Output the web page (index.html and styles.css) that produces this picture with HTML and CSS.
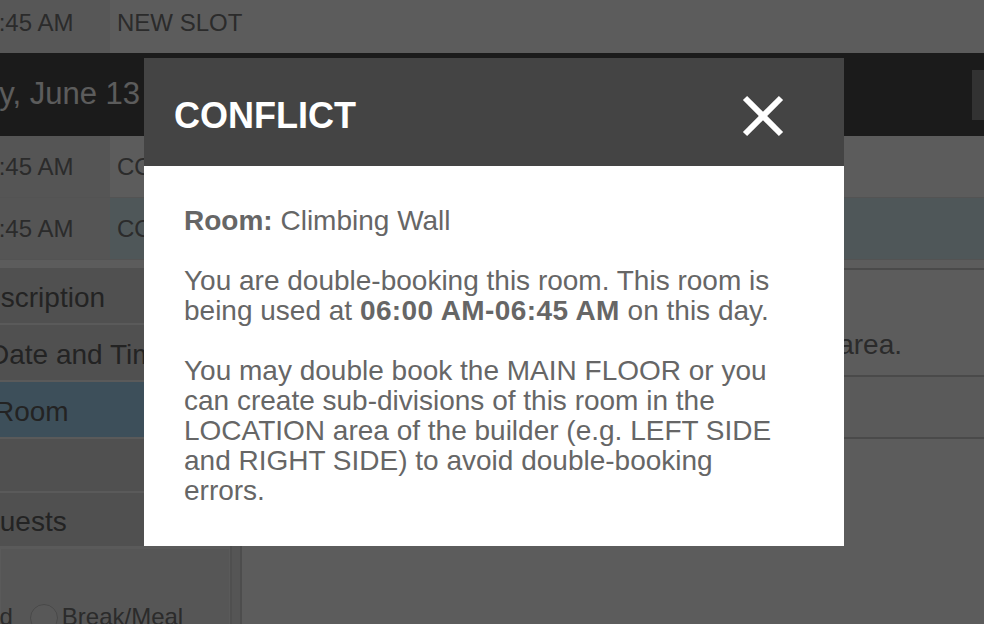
FILE: index.html
```html
<!DOCTYPE html>
<html lang="en">
<head>
<meta charset="utf-8">
<title>Conflict</title>
<link rel="stylesheet" href="styles.css">
</head>
<body>
<div class="page">
  <div class="slot-row slot-row--first">
    <div class="slot-time">06:45 AM</div>
    <div class="slot-name">NEW SLOT</div>
  </div>
  <div class="day-bar">
    <div class="day-title">Tuesday, June 13</div>
    <div class="day-btn"></div>
  </div>
  <div class="slot-row">
    <div class="slot-time">06:45 AM</div>
    <div class="slot-name">CONFLICT SLOT</div>
  </div>
  <div class="slot-row slot-row--selected">
    <div class="slot-time">06:45 AM</div>
    <div class="slot-name">CONFLICT SLOT</div>
  </div>
  <div class="editor">
    <nav class="sidebar">
      <div class="side-item side-item--desc">Description</div>
      <div class="side-item side-item--date">Date and Time</div>
      <div class="side-item side-item--active side-item--room">Room</div>
      <div class="side-item side-item--empty"></div>
      <div class="side-item side-item--guests">Guests</div>
      <div class="side-box">
        <div class="radio-row">
          <span class="radio-label radio-label--first">Timed</span>
          <span class="radio"></span>
          <span class="radio-label">Break/Meal</span>
        </div>
      </div>
    </nav>
    <section class="content">
      <div class="field field--help">
        <div class="help-text">Select a room created in the LOCATION area.</div>
      </div>
      <div class="field field--second"></div>
    </section>
  </div>
</div>

<div class="overlay"></div>

<div class="modal" role="dialog">
  <div class="modal-header">
    <h2 class="modal-title">CONFLICT</h2>
    <svg class="modal-close" width="42" height="42" viewBox="0 0 42 42" aria-label="Close">
      <line x1="3" y1="3" x2="39" y2="39" stroke="#fff" stroke-width="6"/>
      <line x1="39" y1="3" x2="3" y2="39" stroke="#fff" stroke-width="6"/>
    </svg>
  </div>
  <div class="modal-body">
    <p><b>Room:</b> Climbing Wall</p>
    <p>You are double-booking this room. This room is being used at <b class="time-range">06:00 AM-06:45 AM</b> on this day.</p>
    <p>You may double book the MAIN FLOOR or you can create sub-divisions of this room in the LOCATION area of the builder (e.g. LEFT SIDE and RIGHT SIDE) to avoid double-booking errors.</p>
  </div>
</div>
</body>
</html>
```

FILE: styles.css
```css
html, body {
  margin: 0;
  padding: 0;
}

body {
  width: 984px;
  height: 624px;
  overflow: hidden;
  background: #ffffff;
  font-family: "Liberation Sans", Arial, Helvetica, sans-serif;
}

.page {
  margin-top: -8px;
}

/* slot rows */
.slot-row {
  display: flex;
  height: 61px;
  line-height: 61px;
  font-size: 24px;
  color: #777777;
  border-bottom: 1px solid #e6e6e6;
  white-space: nowrap;
}

.slot-row--first {
  border-bottom: 0;
}

.slot-time {
  width: 110px;
  flex: none;
  overflow: hidden;
  background: #ececec;
  text-indent: -28px;
}

.slot-row--first .slot-time {
  background: #f2f2f2;
}

.slot-name {
  flex: 1;
  padding-left: 7px;
  background: #ffffff;
}

.slot-row--selected .slot-name {
  background: #dbf2f7;
}

/* day bar */
.day-bar {
  display: flex;
  justify-content: space-between;
  height: 83px;
  background: #4b4b4b;
  color: #ffffff;
  font-size: 31px;
}

.day-title {
  margin-left: -103px;
  line-height: 34px;
  padding-top: 24px;
  white-space: nowrap;
}

.day-btn {
  width: 40px;
  height: 50px;
  margin-top: 17px;
  margin-right: -28px;
  background: #8b8b8b;
}

/* editor */
.editor {
  display: flex;
  gap: 8px;
  margin-top: 8px;
  height: 356px;
  overflow: hidden;
  background: #ececec;
}

.sidebar {
  width: 230px;
  flex: none;
  display: flex;
  flex-direction: column;
  gap: 2px;
  overflow: hidden;
  background: #f9f9f9;
  border-right: 2px solid #dcdcdc;
  font-size: 28px;
  color: #636363;
}

.side-item {
  flex: none;
  height: 55px;
  line-height: 59px;
  background: #dedede;
  white-space: nowrap;
  overflow: hidden;
}

.side-item--desc { text-indent: -35px; }
.side-item--date { text-indent: -11px; }
.side-item--room { text-indent: -6px; }
.side-item--guests { text-indent: -22px; height: 53px; line-height: 57px; }
.side-item--empty { height: 52px; }

.side-item--active {
  background: #aadcfa;
}

.side-box {
  flex: none;
  height: 120px;
  background: #efefef;
  border: 1px solid #fafafa;
  padding-top: 54px;
}

.radio-row {
  display: flex;
  align-items: flex-start;
  font-size: 24px;
  line-height: 28px;
  color: #777777;
  white-space: nowrap;
}

.radio-label--first {
  margin-left: -54px;
}

.radio {
  width: 26px;
  height: 26px;
  margin: 1px 4px 0 17px;
  border: 1px solid #c8c8c8;
  border-radius: 50%;
  background: #f4f4f4;
}

/* content */
.content {
  flex: 1;
  background: #ffffff;
  border-left: 2px solid #d6d6d6;
  border-top: 2px solid #cecece;
}

.field {
  border-bottom: 2px solid #cecece;
}

.field--help {
  height: 107px;
  box-sizing: border-box;
  padding-top: 59px;
}

.help-text {
  width: 660px;
  text-align: right;
  font-size: 28px;
  line-height: 32px;
  color: #777777;
  white-space: nowrap;
}

.field--second {
  height: 60px;
  background: #fafafa;
}

/* overlay + modal */
.overlay {
  position: fixed;
  inset: 0;
  background: rgba(0, 0, 0, 0.64);
}

.modal {
  position: fixed;
  left: 144px;
  top: 58px;
  width: 700px;
  background: #ffffff;
}

.modal-header {
  display: flex;
  align-items: center;
  justify-content: space-between;
  box-sizing: border-box;
  height: 108px;
  padding: 8px 60px 0 30px;
  background: #444444;
}

.modal-title {
  margin: 0;
  font-size: 36px;
  line-height: 36px;
  font-weight: bold;
  color: #ffffff;
}

.modal-close {
  display: block;
  flex: none;
}

.modal-body {
  padding: 40px 44px 40px 40px;
  font-size: 28px;
  line-height: 30px;
  color: #666666;
}

.modal-body p {
  margin: 30px 0 0;
}

.modal-body p:first-child {
  margin-top: 0;
}

.time-range {
  letter-spacing: 0.4px;
}
```
